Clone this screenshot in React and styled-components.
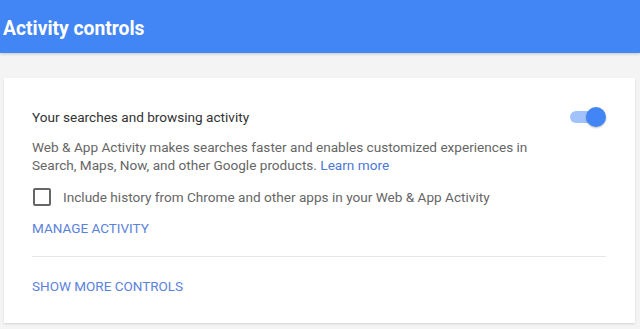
import React from 'react';
import styled, { createGlobalStyle } from 'styled-components';

const GlobalStyle = createGlobalStyle`
  html, body {
    margin: 0;
    padding: 0;
    background: #f4f4f4;
    font-family: Roboto, "Liberation Sans", Arial, sans-serif;
  }
`;

const Page = styled.div`
  width: 640px;
  height: 329px;
  overflow: hidden;
  background: #f4f4f4;
`;

const Header = styled.header`
  height: 53px;
  box-sizing: border-box;
  background: #4285f4;
  box-shadow: 0 1px 3px rgba(0, 0, 0, 0.2);
  display: flex;
  align-items: center;
  padding: 4px 3px 0;
  position: relative;
  z-index: 1;
`;

const Title = styled.h1`
  margin: 0;
  color: #fff;
  font-size: 19.3px;
  font-weight: 700;
`;

const Body = styled.main`
  padding: 25px 5px 0 4px;
`;

const Card = styled.section`
  background: #fff;
  box-shadow: 0 1px 2px rgba(0, 0, 0, 0.14);
  padding: 29px 29px 0 28px;
  height: 245px;
  box-sizing: border-box;
`;

const Row = styled.div`
  display: flex;
  align-items: center;
  justify-content: space-between;
`;

const Heading = styled.div`
  color: #333;
  font-size: 13.6px;
  line-height: 20px;
`;

const Description = styled.p`
  margin: 11px 0 0;
  color: #666;
  font-size: 13.6px;
  line-height: 18px;
  max-width: 505px;
`;

const LearnMore = styled.a`
  color: #4a78d8;
  text-decoration: none;
`;

const CheckRow = styled.label`
  display: flex;
  align-items: center;
  margin-top: 13px;
  color: #666;
  font-size: 13.6px;
  line-height: 20px;
`;

const Box = styled.span`
  width: 18px;
  height: 18px;
  box-sizing: border-box;
  border: 2px solid #666;
  border-radius: 2px;
  margin: 0 12px 0 1px;
`;

const Link = styled.a`
  display: block;
  color: #5b82dc;
  font-size: 13.5px;
  text-transform: uppercase;
  text-decoration: none;
  line-height: 20px;
  margin-top: ${p => p.$top}px;
`;

const Divider = styled.hr`
  border: 0;
  border-top: 1px solid #e6e6e6;
  margin: 18px 0 0;
`;

const Track = styled.span`
  position: relative;
  width: 30px;
  height: 12px;
  border-radius: 6px;
  background: #a1c2fa;
  margin-right: 6px;
`;

const Thumb = styled.span`
  position: absolute;
  top: -4px;
  right: -6px;
  width: 20px;
  height: 20px;
  border-radius: 50%;
  background: #4285f4;
  box-shadow: 0 1px 2px rgba(0, 0, 0, 0.25);
`;

export default function App() {
  return (
    <Page>
      <GlobalStyle />
      <Header>
        <Title>Activity controls</Title>
      </Header>
      <Body>
        <Card>
          <Row>
            <Heading>Your searches and browsing activity</Heading>
            <Track><Thumb /></Track>
          </Row>
          <Description>
            Web &amp; App Activity makes searches faster and enables customized experiences in
            Search, Maps, Now, and other Google products. <LearnMore href="#">Learn more</LearnMore>
          </Description>
          <CheckRow>
            <Box />
            Include history from Chrome and other apps in your Web &amp; App Activity
          </CheckRow>
          <Link href="#" $top={11}>Manage activity</Link>
          <Divider />
          <Link href="#" $top={19}>Show more controls</Link>
        </Card>
      </Body>
    </Page>
  );
}
